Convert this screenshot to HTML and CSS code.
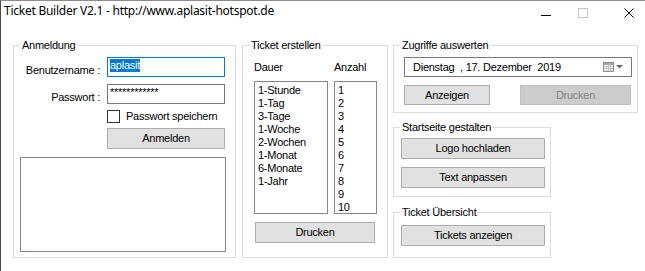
FILE: index.html
```html
<!DOCTYPE html>
<html lang="de">
<head>
<meta charset="utf-8">
<title>Ticket Builder V2.1</title>
<link rel="stylesheet" href="styles.css">
</head>
<body>
<div class="window">
  <div class="titlebar">
    <span class="title">Ticket Builder V2.1 - http://www.aplasit-hotspot.de</span>
    <div class="controls">
      <span class="ctl-min"></span>
      <span class="ctl-max"></span>
      <svg class="ctl-close" width="10" height="10" viewBox="0 0 10 10"><path d="M0.5 0.5L9.5 9.5M9.5 0.5L0.5 9.5" stroke="#000" stroke-width="1" fill="none"/></svg>
    </div>
  </div>
  <div class="client">
    <section class="group g-login">
      <div class="legend">Anmeldung</div>
      <div class="field f-user">
        <span class="lbl">Benutzername :</span>
        <div class="textbox focused"><span class="sel">aplasit</span></div>
      </div>
      <div class="field f-pass">
        <span class="lbl">Passwort :</span>
        <div class="textbox">************</div>
      </div>
      <div class="checkrow">
        <span class="check"></span>
        <span>Passwort speichern</span>
      </div>
      <div class="btn b-login">Anmelden</div>
      <div class="logbox"></div>
    </section>

    <section class="group g-ticket">
      <div class="legend">Ticket erstellen</div>
      <div class="lists">
        <span class="colhead">Dauer</span>
        <span class="colhead">Anzahl</span>
        <div class="listbox">
          <div>1-Stunde</div><div>1-Tag</div><div>3-Tage</div><div>1-Woche</div><div>2-Wochen</div><div>1-Monat</div><div>6-Monate</div><div>1-Jahr</div>
        </div>
        <div class="listbox">
          <div>1</div><div>2</div><div>3</div><div>4</div><div>5</div><div>6</div><div>7</div><div>8</div><div>9</div><div>10</div>
        </div>
      </div>
      <div class="btn b-print">Drucken</div>
    </section>

    <div class="col3">
      <section class="group g-stats">
        <div class="legend">Zugriffe auswerten</div>
        <div class="datepicker">
          <span class="datetext">Dienstag&nbsp;&nbsp;, 17. Dezember&nbsp; 2019</span>
          <svg class="calicon" width="11" height="10" viewBox="0 0 11 10"><rect x="0.5" y="0.5" width="10" height="9" fill="#f4f4f4" stroke="#8c8c8c"/><rect x="1" y="1" width="9" height="2" fill="#a8a8a8"/><path d="M1 4.5H10M1 6.5H10M3.5 3V9M5.5 3V9M7.5 3V9" stroke="#c4c4c4" stroke-width="1"/></svg>
          <svg class="ddarrow" width="7" height="4" viewBox="0 0 7 4"><path d="M0 0H7L3.5 3.5Z" fill="#6a6a78"/></svg>
        </div>
        <div class="btnrow">
          <div class="btn b-show">Anzeigen</div>
          <div class="btn disabled b-print2">Drucken</div>
        </div>
      </section>

      <section class="group g-start">
        <div class="legend">Startseite gestalten</div>
        <div class="btn b-wide b-logo">Logo hochladen</div>
        <div class="btn b-wide b-text">Text anpassen</div>
      </section>

      <section class="group g-over">
        <div class="legend">Ticket Übersicht</div>
        <div class="btn b-wide b-tickets">Tickets anzeigen</div>
      </section>
    </div>
  </div>
</div>
</body>
</html>
```

FILE: styles.css
```css
* { box-sizing: border-box; margin: 0; padding: 0; }
html, body { width: 645px; height: 271px; overflow: hidden; background: #fff; }
body {
  font-family: "Liberation Sans", Arial, sans-serif;
  font-size: 11px;
  line-height: 13px;
  letter-spacing: -0.25px;
  color: #000;
}

.window {
  width: 645px;
  height: 271px;
  border-left: 1px solid #4f4a46;
  border-top: 1px solid #8c8c8c;
  background: #fff;
  display: flex;
  flex-direction: column;
}

/* title bar */
.titlebar {
  height: 30px;
  display: flex;
  align-items: flex-start;
}
.title {
  flex: 1;
  font-family: "Noto Sans", "Open Sans", sans-serif;
  font-size: 12px;
  line-height: 16px;
  letter-spacing: -0.25px;
  padding: 2px 0 0 3px;
  white-space: nowrap;
}
.controls {
  display: flex;
  align-items: flex-start;
  margin-right: 11px;
}
.ctl-min {
  width: 10px;
  height: 1px;
  background: #000;
  margin-top: 14px;
}
.ctl-max {
  width: 10px;
  height: 10px;
  border: 1px solid #c4c4c4;
  margin: 7px 0 0 27px;
}
.ctl-close {
  display: block;
  margin: 7px 0 0 36px;
}

/* client area */
.client {
  display: flex;
  align-items: flex-start;
  padding: 14px 0 0 12px;
}

.group {
  border: 1px solid #dcdcdc;
  display: flex;
  flex-direction: column;
  align-items: flex-start;
}
.legend {
  margin: -7px 0 0 6px;
  padding: 0 2px;
  background: #fff;
  line-height: 13px;
  white-space: nowrap;
}

/* Anmeldung */
.g-login { width: 223px; height: 213px; }
.field { display: flex; margin-top: 7px; }
.f-user { margin-top: 5px; }
.lbl {
  width: 86px;
  margin-right: 7px;
  text-align: right;
  padding-top: 7px;
  white-space: nowrap;
}
.textbox {
  width: 118px;
  height: 20px;
  border: 1px solid #7a7a7a;
  padding: 1px 2px;
  background: #fff;
  white-space: nowrap;
}
.textbox.focused { border-color: #0078d7; }
.sel {
  display: inline-block;
  background: #0078d7;
  color: #fff;
  line-height: 13px;
}
.checkrow {
  display: flex;
  align-items: flex-start;
  margin: 6px 0 0 93px;
  gap: 6px;
  white-space: nowrap;
}
.check {
  width: 13px;
  height: 13px;
  border: 1px solid #333;
  background: #fff;
}

.btn {
  height: 21px;
  border: 1px solid #adadad;
  background: #e1e1e1;
  display: flex;
  align-items: center;
  justify-content: center;
  white-space: nowrap;
}
.btn.disabled {
  background: #cccccc;
  border-color: #bfbfbf;
  color: #838383;
}
.b-login { width: 118px; margin: 5px 0 0 93px; }
.logbox {
  width: 206px;
  height: 95px;
  margin: 8px 0 0 6px;
  border: 1px solid #828790;
  background: #fff;
}

/* Ticket erstellen */
.g-ticket { width: 146px; height: 213px; margin-left: 6px; }
.lists {
  display: grid;
  grid-template-columns: 74px 43px;
  column-gap: 6px;
  row-gap: 7px;
  margin: 9px 0 0 11px;
}
.listbox {
  height: 133px;
  border: 1px solid #828790;
  background: #fff;
  padding: 2px 0 0 3px;
  white-space: nowrap;
}
.b-print { width: 120px; margin: 8px 0 0 12px; }

/* right column */
.col3 {
  display: flex;
  flex-direction: column;
  align-items: flex-start;
  margin-left: 5px;
}
.g-stats { width: 245px; height: 68px; }
.datepicker {
  width: 228px;
  height: 20px;
  margin: 5px 0 0 10px;
  border: 1px solid #7a7a7a;
  display: flex;
  align-items: center;
  padding: 0 8px 0 8px;
  white-space: nowrap;
}
.datetext { flex: 1; }
.calicon { display: block; }
.ddarrow { display: block; margin-left: 2px; }
.btnrow { display: flex; margin: 8px 0 0 10px; }
.btnrow .btn { height: 20px; }
.b-show { width: 86px; }
.b-print2 { width: 111px; margin-left: 30px; }

.g-start { width: 158px; height: 70px; margin-top: 14px; }
.g-over { width: 158px; height: 46px; margin-top: 15px; }
.b-wide { width: 144px; margin-left: 7px; }
.b-logo { margin-top: 4px; }
.b-text { margin-top: 8px; }
.b-tickets { margin-top: 6px; }
```
